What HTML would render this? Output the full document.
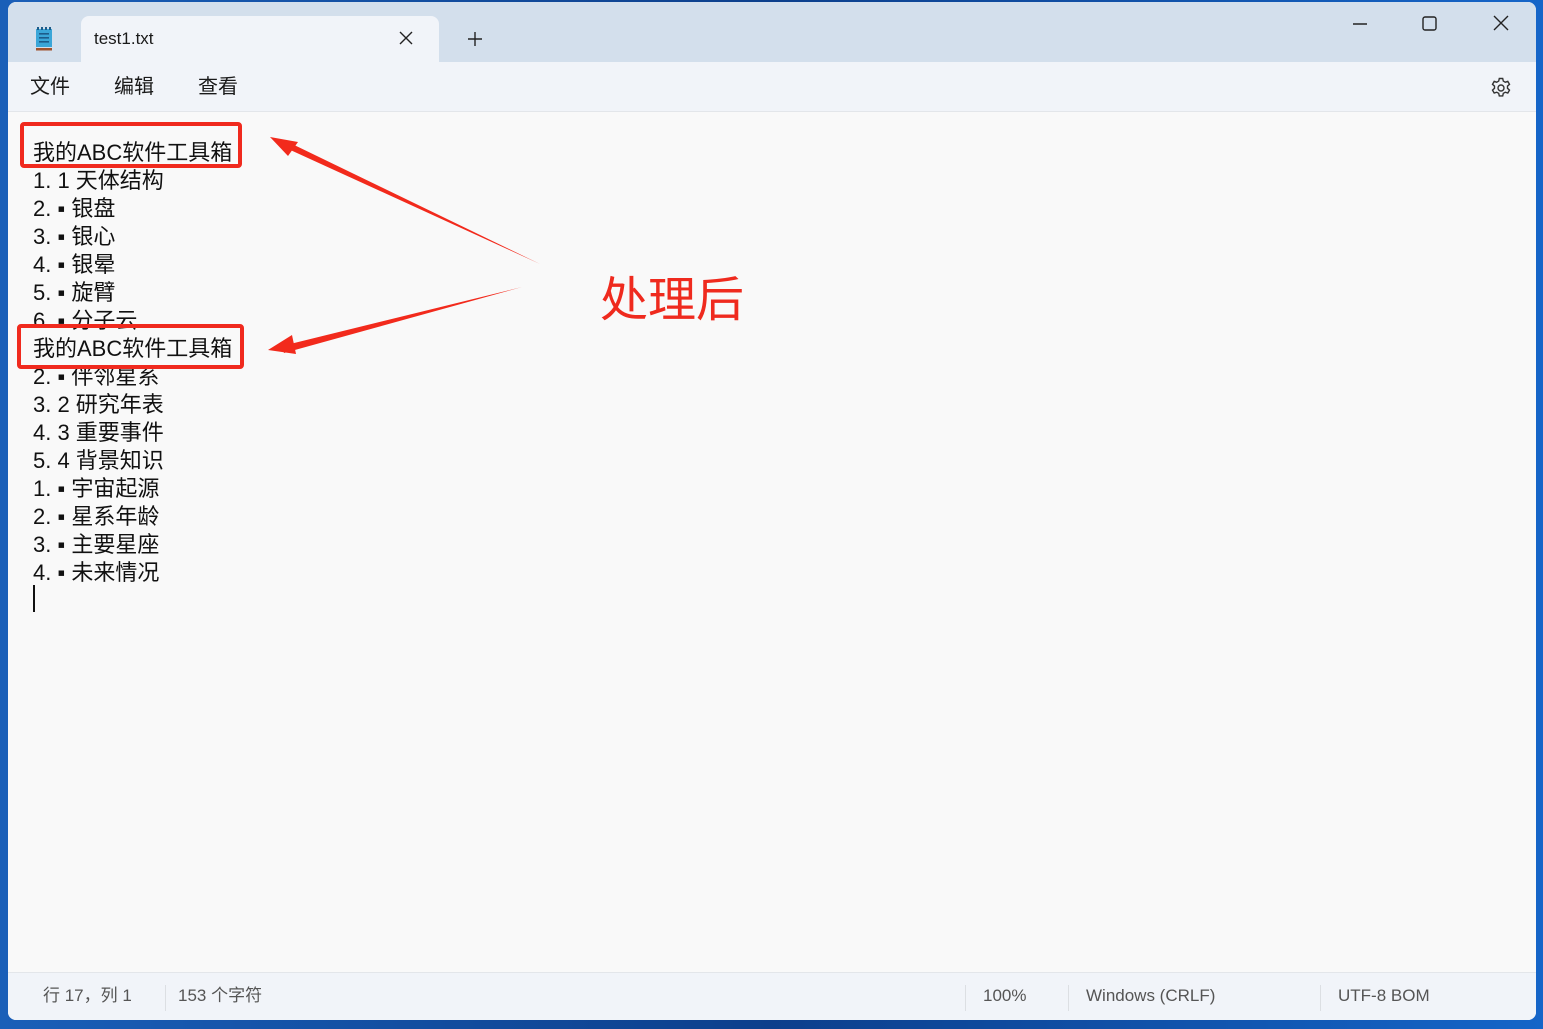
<!DOCTYPE html>
<html><head><meta charset="utf-8"><style>
*{margin:0;padding:0;box-sizing:border-box}
body{width:1543px;height:1029px;overflow:hidden;position:relative;background:linear-gradient(90deg,#1a5fb8,#0c3f8c 50%,#1565c8);font-family:"Liberation Sans","Noto Sans CJK SC",sans-serif}
.win{position:absolute;left:8px;top:2px;width:1528px;height:1018px;background:#f9f9f9;border-radius:8px;overflow:hidden}
.title{position:absolute;left:0;top:0;width:100%;height:60px;background:#d3dfec}
.tab{position:absolute;left:73px;top:14px;width:358px;height:48px;background:#f1f4f9;border-radius:8px 8px 0 0}
.menu{position:absolute;left:0;top:60px;width:100%;height:50px;background:#f1f4f9;border-bottom:1px solid #e3e6ea}
.menu span{position:absolute;top:12px;font-size:20px;line-height:26px;color:#1a1a1a}
.text{position:absolute;left:25px;top:137px;font-size:22px;line-height:28px;color:#111;white-space:pre}
.status{position:absolute;left:0;top:970px;width:100%;height:48px;background:#f1f4f9;border-top:1px solid #e3e6ea;font-size:17px;color:#555}
.status span{position:absolute;top:12px;line-height:22px}
.sep{position:absolute;top:12px;width:1px;height:26px;background:#dcdfe3}
</style></head><body>
<div class="win">
 <div class="title"></div>
 <div class="tab"><span style="position:absolute;left:13px;top:13px;font-size:17px;color:#1a1a1a">test1.txt</span></div>
 <svg style="position:absolute;left:0;top:0" width="1528" height="60">
  <rect x="28" y="27" width="16" height="18" fill="#3aa6d8"/>
  <rect x="28" y="46" width="16" height="2.5" fill="#a0522d"/>
  <g fill="#1c5c8a"><rect x="29" y="25" width="2" height="3"/><rect x="33" y="25" width="2" height="3"/><rect x="37" y="25" width="2" height="3"/><rect x="41" y="25" width="2" height="3"/>
  <rect x="31" y="31" width="10" height="1.6"/><rect x="31" y="35" width="10" height="1.6"/><rect x="31" y="39" width="10" height="1.6"/></g>
  <g stroke="#222" stroke-width="1.4" fill="none">
   <path d="M392 30l12 12M404 30l-12 12"/>
   <path d="M460 37h14M467 30v14"/>
   <path d="M1345 22h14"/>
   <rect x="1415" y="15" width="13" height="13" rx="2"/>
   <path d="M1486 14l14 14M1500 14l-14 14"/>
  </g>
 </svg>
 <div class="menu">
  <span style="left:22px">文件</span><span style="left:106px">编辑</span><span style="left:190px">查看</span>
  <svg style="position:absolute;left:1481px;top:14px" width="24" height="24" viewBox="0 0 24 24" fill="none" stroke="#333" stroke-width="1.4"><circle cx="12" cy="12" r="3"/><path d="M10.3 2.5h3.4l.6 2.6 2 1.1 2.5-.8 1.7 2.9-2 1.8v2.2l2 1.8-1.7 2.9-2.5-.8-2 1.1-.6 2.6h-3.4l-.6-2.6-2-1.1-2.5.8-1.7-2.9 2-1.8v-2.2l-2-1.8 1.7-2.9 2.5.8 2-1.1z"/></svg>
 </div>
 <div class="text">我的ABC软件工具箱
1. 1 天体结构
2. ▪ 银盘
3. ▪ 银心
4. ▪ 银晕
5. ▪ 旋臂
6. ▪ 分子云
我的ABC软件工具箱
2. ▪ 伴邻星系
3. 2 研究年表
4. 3 重要事件
5. 4 背景知识
1. ▪ 宇宙起源
2. ▪ 星系年龄
3. ▪ 主要星座
4. ▪ 未来情况</div>
 <div style="position:absolute;left:25px;top:583px;width:1.5px;height:27px;background:#111"></div>
 <div style="position:absolute;left:12px;top:120px;width:222px;height:46px;border:4px solid #f02a1e;border-radius:4px"></div>
 <div style="position:absolute;left:9px;top:322px;width:227px;height:45px;border:4px solid #f02a1e;border-radius:4px"></div>
 <svg style="position:absolute;left:0;top:0" width="1528" height="400">
  <g fill="#f22a1c">
   <path d="M532 262 L278 146 L280 140 Z"/>
   <path d="M262 135 L290 140 L280 154 Z"/>
   <path d="M514 285 L276 351 L274 344 Z"/>
   <path d="M260 348 L284 333 L288 352 Z"/>
  </g>
  <text x="592" y="314" font-size="48" fill="#ef2a1e" font-family="Liberation Sans,Noto Sans CJK SC,sans-serif">处理后</text>
 </svg>
 <div class="status">
  <span style="left:35px">行 17，列 1</span><div class="sep" style="left:157px"></div>
  <span style="left:170px">153 个字符</span>
  <div class="sep" style="left:957px"></div><span style="left:975px">100%</span>
  <div class="sep" style="left:1060px"></div><span style="left:1078px">Windows (CRLF)</span>
  <div class="sep" style="left:1312px"></div><span style="left:1330px">UTF-8 BOM</span>
 </div>
</div>
</body></html>
